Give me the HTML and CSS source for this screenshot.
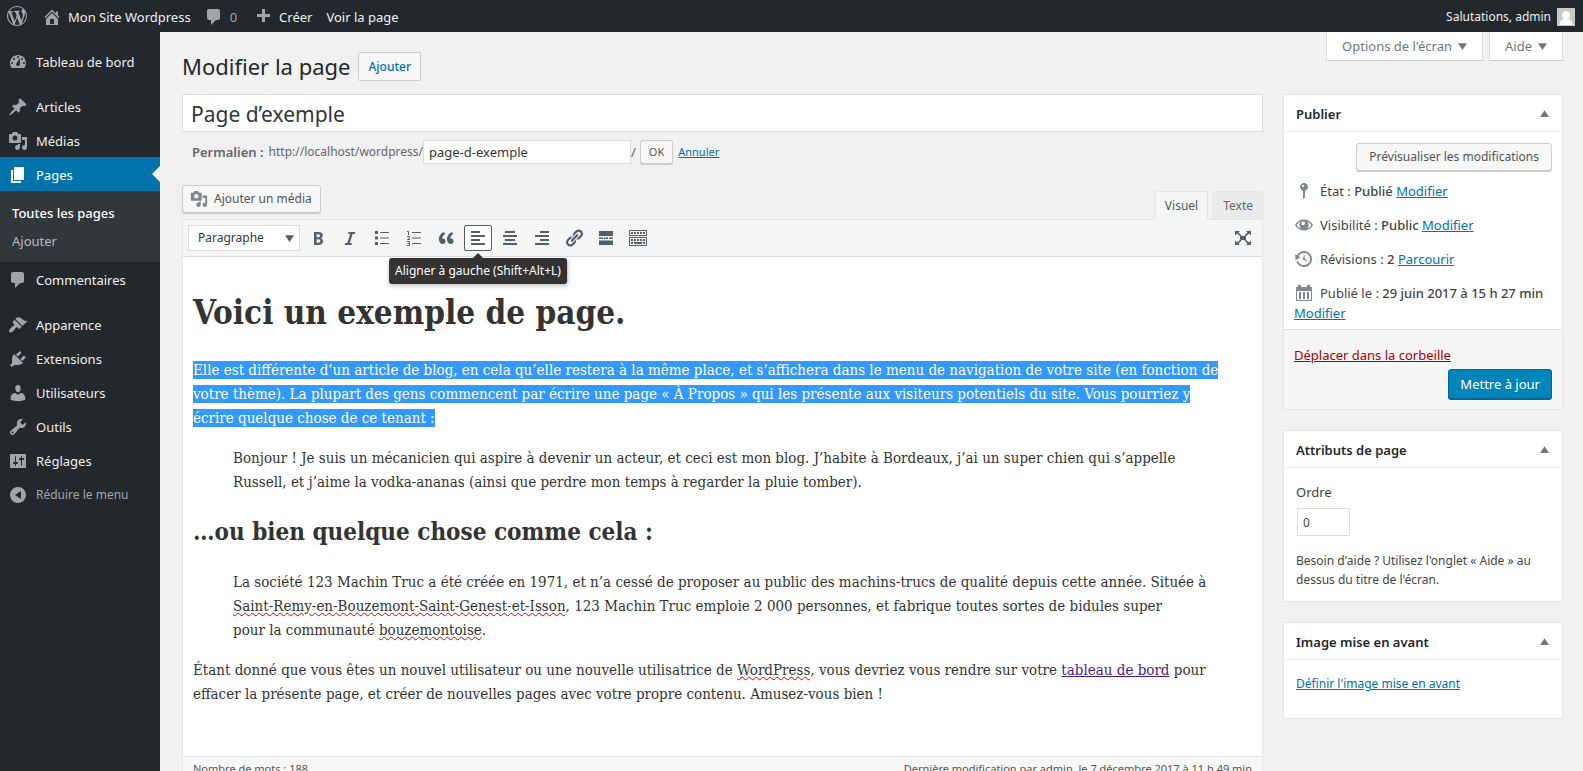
FILE: index.html
```html
<!DOCTYPE html>
<html lang="fr">
<head>
<meta charset="utf-8">
<title>Modifier la page</title>
<link rel="stylesheet" href="styles.css">
</head>
<body>
<svg class="sprite" aria-hidden="true">
  <symbol id="i-wp" viewBox="0 0 20 20"><path d="M20 10c0-5.51-4.49-10-10-10C4.48 0 0 4.49 0 10c0 5.52 4.48 10 10 10 5.51 0 10-4.48 10-10zM7.78 15.37L4.37 6.22c.55-.02 1.17-.08 1.17-.08.5-.06.44-1.13-.06-1.11 0 0-1.45.11-2.37.11-.18 0-.37 0-.58-.01C4.12 2.69 6.87 1.11 10 1.11c2.33 0 4.45.87 6.05 2.34-.68-.11-1.65.39-1.65 1.58 0 .74.45 1.36.9 2.1.35.61.55 1.36.55 2.46 0 1.49-1.4 5-1.4 5l-3.03-8.37c.54-.02.82-.17.82-.17.5-.05.44-1.25-.06-1.22 0 0-1.44.12-2.38.12-.87 0-2.33-.12-2.33-.12-.5-.03-.56 1.2-.06 1.22l.92.08 1.26 3.41zM17.41 10c.24-.64.74-1.87.43-4.25.7 1.29 1.05 2.71 1.05 4.25 0 3.29-1.73 6.24-4.4 7.78.97-2.59 1.94-5.2 2.92-7.78zM6.1 18.09C3.12 16.65 1.11 13.53 1.11 10c0-1.3.23-2.48.72-3.59C3.25 10.3 4.67 14.2 6.1 18.09zm4.03-6.63l2.58 6.98c-.86.29-1.76.45-2.71.45-.79 0-1.57-.11-2.29-.33.81-2.38 1.62-4.74 2.42-7.1z"/></symbol>
  <symbol id="i-home" viewBox="0 0 20 20"><path d="M16 8.5l1.53 1.53-1.06 1.06L10 4.6l-6.47 6.49-1.06-1.06L10 2.5l4 4v-2h2v4zm-6-2.46l6 5.99V18H4v-5.97zM12 17v-5H8v5h4z"/></symbol>
  <symbol id="i-comment" viewBox="0 0 20 20"><path d="M5 2h9c1.1 0 2 .9 2 2v7c0 1.1-.9 2-2 2h-2l-5 5v-5H5c-1.1 0-2-.9-2-2V4c0-1.1.9-2 2-2z"/></symbol>
  <symbol id="i-plus" viewBox="0 0 20 20"><path d="M17 7v3h-5v5H9v-5H4V7h5V2h3v5h5z"/></symbol>
  <symbol id="i-dash" viewBox="0 0 20 20"><path fill-rule="evenodd" d="M3.76 16h12.48A7.98 7.98 0 0 0 18 11c0-4.41-3.58-8-8-8s-8 3.59-8 8c0 1.89.66 3.63 1.76 5zM10 4a1 1 0 1 1 0 2 1 1 0 0 1 0-2zM6 6a1 1 0 1 1 0 2 1 1 0 0 1 0-2zm8 0a1 1 0 1 1 0 2 1 1 0 0 1 0-2zm-5.500 5.500l3.400-5.500v6.200c0 1-.8 1.800-1.900 1.800s-1.900-.9-1.900-1.800c0-.3.200-.5.400-.7zM4 10a1 1 0 1 1 0 2 1 1 0 0 1 0-2zm12 0a1 1 0 1 1 0 2 1 1 0 0 1 0-2z"/></symbol>
  <symbol id="i-pin" viewBox="0 0 20 20"><path d="M10.44 3.02l1.82-1.82 6.36 6.35-1.83 1.82c-1.05-.68-2.48-.57-3.41.36l-.75.75c-.92.93-1.04 2.35-.35 3.41l-1.83 1.82-2.41-2.41-2.8 2.79c-.42.42-3.38 2.71-3.8 2.29s1.86-3.39 2.28-3.81l2.79-2.79L4.1 9.36l1.83-1.82c1.05.69 2.48.57 3.4-.36l.75-.75c.93-.92 1.05-2.35.36-3.41z"/></symbol>
  <symbol id="i-media" viewBox="0 0 20 20"><path d="M13 11V4c0-.55-.45-1-1-1h-1.67L9 1H5L3.67 3H2c-.55 0-1 .45-1 1v7c0 .55.45 1 1 1h10c.55 0 1-.45 1-1zM7 4.500c1.380 0 2.500 1.120 2.500 2.500S8.380 9.500 7 9.500 4.500 8.380 4.500 7 5.620 4.500 7 4.500zM14 6h5v10.500c0 1.380-1.120 2.500-2.500 2.500S14 17.880 14 16.500s1.120-2.500 2.500-2.500c.17 0 .34.02.5.05V9h-3V6zm-4 8.050V13h2v3.500c0 1.380-1.120 2.500-2.500 2.500S7 17.880 7 16.500 8.120 14 9.500 14c.17 0 .34.02.5.05z"/></symbol>
  <symbol id="i-page" viewBox="0 0 20 20"><path d="M6 15V2h10v13H6zm-1 1h8v2H3V5h2v11z"/></symbol>
  <symbol id="i-brush" viewBox="0 0 20 20"><path d="M14.48 11.060L7.410 3.990l1.500-1.500c.5-.56 2.300-.47 3.510.32 1.210.8 1.430 1.280 2.910 2.100 1.180.64 2.450 1.260 4.450.85zm-.71.71L6.700 4.700 4.930 6.470c-.39.39-.39 1.020 0 1.410l1.060 1.060c.39.39.39 1.030 0 1.420-.6.6-1.430 1.110-2.210 1.690-.35.26-.7.53-1.010.84C1.430 14.230.4 16.080 1.400 17.070c.99 1 2.840-.03 4.180-1.360.31-.31.58-.66.85-1.020.57-.78 1.080-1.610 1.690-2.210.39-.39 1.020-.39 1.410 0l1.060 1.060c.39.39 1.020.39 1.410 0z"/></symbol>
  <symbol id="i-plug" viewBox="0 0 20 20"><path d="M13.110 4.360L9.870 7.600 8 5.730l3.240-3.240c.35-.34 1.050-.2 1.560.32.52.51.66 1.210.31 1.550zm-8 1.770l.91-1.120 9.010 9.010-1.190.84c-.71.71-2.630 1.160-3.820 1.160H6.140L4.900 17.260c-.59.59-1.540.59-2.120 0-.59-.58-.59-1.530 0-2.120l1.240-1.240v-3.880c0-1.130.4-3.190 1.090-3.890zm7.260 3.970l3.240-3.240c.34-.35 1.040-.21 1.550.31.52.51.66 1.210.31 1.550l-3.240 3.250z"/></symbol>
  <symbol id="i-user" viewBox="0 0 20 20"><path d="M10 9.250c-2.270 0-2.730-3.440-2.730-3.440C7 4.020 7.820 2 9.970 2c2.160 0 2.980 2.020 2.710 3.810 0 0-.41 3.440-2.680 3.440zm0 2.570L12.720 10c2.390 0 4.520 2.330 4.520 4.530v2.490s-3.650 1.130-7.240 1.130c-3.650 0-7.240-1.130-7.240-1.130v-2.490c0-2.250 1.940-4.480 4.470-4.480z"/></symbol>
  <symbol id="i-tool" viewBox="0 0 20 20"><path d="M16.680 9.770c-1.340 1.340-3.300 1.670-4.950.99l-5.410 6.520c-.99.99-2.590.99-3.580 0s-.99-2.590 0-3.570l6.520-5.420c-.68-1.650-.35-3.610.99-4.950 1.280-1.280 3.120-1.620 4.720-1.060l-2.890 2.890 2.820 2.820 2.860-2.870c.53 1.580.18 3.390-1.080 4.650zM3.810 16.210c.4.39 1.040.39 1.430 0 .4-.4.4-1.040 0-1.430-.39-.4-1.030-.4-1.430 0-.39.39-.39 1.030 0 1.430z"/></symbol>
  <symbol id="i-set" viewBox="0 0 20 20"><path fill-rule="evenodd" d="M18 16V4c0-.55-.45-1-1-1H3c-.55 0-1 .45-1 1v12c0 .55.45 1 1 1h14c.55 0 1-.45 1-1zM8 11h1c.55 0 1 .45 1 1s-.45 1-1 1H8v1.500c0 .28-.22.5-.5.5s-.5-.22-.5-.5V13H6c-.55 0-1-.45-1-1s.45-1 1-1h1V5.500c0-.28.22-.5.5-.5s.5.22.5.5V11zm5-2h-1c-.55 0-1-.45-1-1s.45-1 1-1h1V5.500c0-.28.22-.5.5-.5s.5.22.5.5V7h1c.55 0 1 .45 1 1s-.45 1-1 1h-1v5.500c0 .28-.22.5-.5.5s-.5-.22-.5-.5V9z"/></symbol>
  <symbol id="i-collapse" viewBox="0 0 20 20"><path fill-rule="evenodd" d="M10 2a8 8 0 1 0 0 16 8 8 0 0 0 0-16zM13 6v8l-6-4z"/></symbol>
  <symbol id="i-bold" viewBox="0 0 20 20"><path d="M6 4v13h4.540c1.370 0 2.460-.33 3.260-1 .8-.66 1.200-1.580 1.200-2.770 0-.84-.17-1.510-.51-2.010s-.9-.85-1.670-1.030v-.09c.57-.1 1.020-.4 1.360-.9s.51-1.130.51-1.910c0-1.140-.39-1.980-1.170-2.500C12.750 4.260 11.500 4 9.780 4H6zm2.570 5.150V6.260h1.360c.73 0 1.270.11 1.610.32.34.22.51.58.51 1.070 0 .54-.16.92-.47 1.150s-.82.35-1.510.35h-1.500zm0 2.190h1.600c1.440 0 2.160.53 2.160 1.610 0 .6-.17 1.050-.51 1.340s-.86.43-1.570.43H8.570v-3.380z"/></symbol>
  <symbol id="i-italic" viewBox="0 0 20 20"><path d="M14.780 6h-2.130l-2.800 9h2.120l-.62 2H4.600l.62-2h2.140l2.800-9H8.030l.62-2h6.750z"/></symbol>
  <symbol id="i-ul" viewBox="0 0 20 20"><path d="M3 3h3v3H3zM8 4h9v1H8zM3 8.500h3v3H3zM8 9.500h9v1H8zM3 14h3v3H3zM8 15h9v1H8z"/></symbol>
  <symbol id="i-ol" viewBox="0 0 20 20"><path d="M8 4h9v1H8zM8 9.500h9v1H8zM8 15h9v1H8z"/><path fill="none" stroke="currentColor" d="M3 3.500h1.500V7M3 8.500h2.500v1.200L3.500 11.500h2.500M3 13.500h2.500v4H3M3.500 15.500h2"/></symbol>
  <symbol id="i-quote" viewBox="0 0 20 20"><path d="M9.490 13.220c0-.74-.2-1.380-.61-1.900-.62-.78-1.830-.88-2.530-.72-.29-1.650 1.110-3.750 2.920-4.650L7.880 4c-2.730 1.300-5.420 4.280-4.960 8.050C3.210 14.430 4.590 16 6.540 16c.85 0 1.560-.25 2.120-.75s.83-1.180.83-2.030zm8.050 0c0-.74-.2-1.380-.61-1.900-.63-.78-1.830-.88-2.530-.72-.29-1.650 1.110-3.750 2.920-4.650L15.930 4c-2.730 1.300-5.410 4.280-4.950 8.050.29 2.380 1.660 3.950 3.610 3.950.85 0 1.560-.25 2.120-.75s.83-1.180.83-2.030z"/></symbol>
  <symbol id="i-left" viewBox="0 0 20 20"><path d="M3 3h9v2H3zM3 7h14v2H3zM3 11h9v2H3zM3 15h14v2H3z"/></symbol>
  <symbol id="i-center" viewBox="0 0 20 20"><path d="M5 3h10v2H5zM3 7h14v2H3zM5 11h10v2H5zM3 15h14v2H3z"/></symbol>
  <symbol id="i-right" viewBox="0 0 20 20"><path d="M8 3h9v2H8zM3 7h14v2H3zM8 11h9v2H8zM3 15h14v2H3z"/></symbol>
  <symbol id="i-link" viewBox="0 0 20 20"><path d="M17.740 2.760c1.680 1.690 1.680 4.410 0 6.100l-1.530 1.520c-1.120 1.120-2.700 1.470-4.140 1.090l2.620-2.610.76-.77.76-.76c.84-.84.84-2.200 0-3.040-.84-.85-2.200-.85-3.040 0l-.77.76-3.380 3.380c-.37-1.440-.02-3.020 1.100-4.140l1.520-1.530c1.690-1.680 4.420-1.680 6.100 0zM8.590 13.430l5.340-5.340c.42-.42.42-1.100 0-1.520-.44-.43-1.130-.39-1.530 0l-5.330 5.340c-.42.42-.42 1.100 0 1.520.44.43 1.130.39 1.520 0zm-.76 2.290l4.140-4.150c.38 1.440.03 3.020-1.090 4.140l-1.520 1.530c-1.690 1.680-4.410 1.680-6.100 0-1.680-1.680-1.680-4.420 0-6.100l1.530-1.520c1.120-1.120 2.700-1.470 4.140-1.100l-4.140 4.150c-.85.84-.85 2.200 0 3.050.84.84 2.200.84 3.040 0z"/></symbol>
  <symbol id="i-more" viewBox="0 0 20 20"><path d="M3 3h14v5H3zM3 9.500h4v1.500H3zM8 9.500h4v1.500H8zM13 9.500h4v1.500h-4zM3 12.500h14v4.500H3z"/></symbol>
  <symbol id="i-kbd" viewBox="0 0 20 20"><path fill="none" stroke="currentColor" d="M1.500 2.500h17v5h-17zM1.500 9.500h17v8h-17z"/><path d="M3 4h2v2H3zM6 4h2v2H6zM9 4h2v2H9zM12 4h2v2h-2zM15 4h2v2h-2zM3 11h2v2H3zM6 11h2v2H6zM9 11h2v2H9zM12 11h2v2h-2zM15 11h2v2h-2zM3 14h2v2H3zM6 14h8v2H6zM15 14h2v2h-2z"/></symbol>
  <symbol id="i-full" viewBox="0 0 20 20"><path d="M7 8h6v4H7zM2 3h5L5.500 4.500 8.500 7.500 7.500 8.500 4 5.500 2 7.500zM18 3h-5l1.500 1.500-3 3 1 1L16 5.500l2 2zM2 17h5l-1.500-1.500 3-3-1-1L4 14.500l-2-2zM18 17h-5l1.500-1.500-3-3 1-1 3.500 3 2-2z"/></symbol>
  <symbol id="i-status" viewBox="0 0 20 20"><path fill-rule="evenodd" d="M14 6c0 1.860-1.280 3.410-3 3.860V16c0 1-2 2-2 2V9.860C7.280 9.410 6 7.860 6 6c0-2.210 1.790-4 4-4s4 1.790 4 4zM8 5c0 .55.45 1 1 1s1-.45 1-1-.45-1-1-1-1 .45-1 1z"/></symbol>
  <symbol id="i-eye" viewBox="0 0 20 20"><path fill-rule="evenodd" d="M1 10c1.800-3.500 5-5.500 9-5.500s7.200 2 9 5.500c-1.800 3.500-5 5.500-9 5.500S2.800 13.500 1 10zm1.700 0c1 1.700 2.400 3 4.300 3.600A4.700 4.700 0 0 1 7 6.400C5.100 7 3.700 8.300 2.700 10zm14.600 0c-1-1.700-2.400-3-4.300-3.600a4.700 4.700 0 0 1 0 7.200c1.900-.6 3.300-1.900 4.300-3.600zM9.500 6.500c-1.200 0-2 .8-2 2s1 1.800 2 1.500c1-.3 1.500-1 1.500-2 0-.9-.6-1.500-1.500-1.500z"/></symbol>
  <symbol id="i-rev" viewBox="0 0 20 20"><path d="M13.650 2.880c3.930 2.010 5.480 6.840 3.470 10.770s-6.830 5.480-10.770 3.470c-1.870-.96-3.200-2.560-3.860-4.400l1.640-1.030c.45 1.570 1.520 2.950 3.080 3.760 3.010 1.540 6.690.35 8.230-2.660 1.550-3.010.36-6.690-2.650-8.240C9.780 3.010 6.100 4.200 4.560 7.210l1.880.97-4.950 3.080-.39-5.820 1.780.91C4.900 2.400 9.750.89 13.650 2.880zm-4.360 7.830C9.110 10.530 9 10.280 9 10c0-.07.03-.12.04-.19h-.01L10 5l.97 4.810L14 13l-4.500-2.120.02-.02c-.08-.04-.16-.09-.23-.15z"/></symbol>
  <symbol id="i-cal" viewBox="0 0 20 20"><path fill-rule="evenodd" d="M2 4h2V3a1 1 0 0 1 3 0v1h6V3a1 1 0 0 1 3 0v1h2v14H2zM3 8v9h14V8zM5 9h2v7H5zM9 9h2v7H9zM13 9h2v7h-2z"/></symbol>
  <symbol id="i-down" viewBox="0 0 8 6"><path d="M0 0h8L4 6z"/></symbol>
  <symbol id="i-up" viewBox="0 0 8 6"><path d="M0 6h8L4 0z"/></symbol>
</svg>

<div class="app">
  <header class="bar">
    <a class="bar-item bar-wp" href="#" aria-label="WordPress"><svg class="icon"><use href="#i-wp"/></svg></a>
    <a class="bar-item bar-site" href="#"><svg class="icon"><use href="#i-home"/></svg>Mon Site Wordpress</a>
    <a class="bar-item bar-comments" href="#"><svg class="icon"><use href="#i-comment"/></svg>0</a>
    <a class="bar-item bar-new" href="#"><svg class="icon"><use href="#i-plus"/></svg>Créer</a>
    <a class="bar-item" href="#">Voir la page</a>
    <a class="bar-item bar-user" href="#">Salutations, admin
      <svg class="avatar" viewBox="0 0 18 18"><path fill="#c8c8c8" d="M0 0h18v18H0z"/><path fill="#fff" d="M9 3c2.500 0 4 1.700 4 4 0 1.500-.6 2.700-1.500 3.500.6 1.200 3.500 1.500 4 5.500v1h-13v-1c.5-4 3.400-4.300 4-5.500C5.600 9.700 5 8.500 5 7c0-2.300 1.500-4 4-4z"/></svg>
    </a>
  </header>

  <div class="body">
    <nav class="menu">
      <a class="menu-item" href="#"><svg class="icon"><use href="#i-dash"/></svg>Tableau de bord</a>
      <a class="menu-item first" href="#"><svg class="icon"><use href="#i-pin"/></svg>Articles</a>
      <a class="menu-item" href="#"><svg class="icon"><use href="#i-media"/></svg>Médias</a>
      <a class="menu-item current" href="#"><svg class="icon"><use href="#i-page"/></svg>Pages</a>
      <div class="submenu">
        <a class="sub-item active" href="#">Toutes les pages</a>
        <a class="sub-item" href="#">Ajouter</a>
      </div>
      <a class="menu-item" href="#"><svg class="icon"><use href="#i-comment"/></svg>Commentaires</a>
      <a class="menu-item first" href="#"><svg class="icon"><use href="#i-brush"/></svg>Apparence</a>
      <a class="menu-item" href="#"><svg class="icon"><use href="#i-plug"/></svg>Extensions</a>
      <a class="menu-item" href="#"><svg class="icon"><use href="#i-user"/></svg>Utilisateurs</a>
      <a class="menu-item" href="#"><svg class="icon"><use href="#i-tool"/></svg>Outils</a>
      <a class="menu-item" href="#"><svg class="icon"><use href="#i-set"/></svg>Réglages</a>
      <button class="menu-item collapse" type="button"><svg class="icon"><use href="#i-collapse"/></svg>Réduire le menu</button>
    </nav>

    <main class="content">
      <div class="top">
        <div class="heading">
          <h1 class="title">Modifier la page</h1>
          <a class="add-new" href="#">Ajouter</a>
        </div>
        <div class="screen-tabs">
          <button class="screen-tab" type="button">Options de l'écran<svg class="caret"><use href="#i-down"/></svg></button>
          <button class="screen-tab" type="button">Aide<svg class="caret"><use href="#i-down"/></svg></button>
        </div>
      </div>

      <div class="columns">
        <section class="primary">
          <input class="page-title" type="text" aria-label="Titre" value="Page d’exemple">
          <div class="permalink">
            <label class="permalink-label" for="slug"><strong>Permalien :</strong><span>http://localhost/wordpress/</span></label><input class="slug" id="slug" type="text" value="page-d-exemple"><span>/</span>
            <button class="button small" type="button">OK</button>
            <a class="cancel" href="#">Annuler</a>
          </div>
          <div class="editor-tools">
            <button class="button add-media" type="button"><svg class="icon"><use href="#i-media"/></svg>Ajouter un média</button>
            <div class="editor-tabs">
              <button class="editor-tab on" type="button">Visuel</button>
              <button class="editor-tab" type="button">Texte</button>
            </div>
          </div>
          <div class="editor">
            <div class="toolbar">
              <span class="format"><select class="format-select" aria-label="Format"><option>Paragraphe</option></select><svg class="caret"><use href="#i-down"/></svg></span>
              <button class="tool" type="button" aria-label="Gras"><svg class="icon"><use href="#i-bold"/></svg></button>
              <button class="tool" type="button" aria-label="Italique"><svg class="icon"><use href="#i-italic"/></svg></button>
              <button class="tool" type="button" aria-label="Liste à puces"><svg class="icon"><use href="#i-ul"/></svg></button>
              <button class="tool" type="button" aria-label="Liste numérotée"><svg class="icon"><use href="#i-ol"/></svg></button>
              <button class="tool" type="button" aria-label="Citation"><svg class="icon"><use href="#i-quote"/></svg></button>
              <button class="tool pressed" type="button" aria-describedby="tip"><svg class="icon"><use href="#i-left"/></svg><span class="tip" id="tip" role="tooltip">Aligner à gauche (Shift+Alt+L)</span></button>
              <button class="tool" type="button" aria-label="Centrer"><svg class="icon"><use href="#i-center"/></svg></button>
              <button class="tool" type="button" aria-label="Aligner à droite"><svg class="icon"><use href="#i-right"/></svg></button>
              <button class="tool" type="button" aria-label="Lien"><svg class="icon"><use href="#i-link"/></svg></button>
              <button class="tool" type="button" aria-label="Lire la suite"><svg class="icon"><use href="#i-more"/></svg></button>
              <button class="tool" type="button" aria-label="Outils avancés"><svg class="icon"><use href="#i-kbd"/></svg></button>
              <button class="tool full" type="button" aria-label="Plein écran"><svg class="icon"><use href="#i-full"/></svg></button>
            </div>
            <div class="document">
              <h1>Voici un exemple de page.</h1>
              <p><span class="selected">Elle est différente d’un article de blog, en cela qu’elle restera à la même place, et s’affichera dans le menu de navigation de votre site (en fonction de votre thème). La plupart des gens commencent par écrire une page « À Propos » qui les présente aux visiteurs potentiels du site. Vous pourriez y<br>écrire quelque chose de ce tenant :</span></p>
              <blockquote>Bonjour ! Je suis un mécanicien qui aspire à devenir un acteur, et ceci est mon blog. J’habite à Bordeaux, j’ai un super chien qui s’appelle Russell, et j’aime la vodka-ananas (ainsi que perdre mon temps à regarder la pluie tomber).</blockquote>
              <h2>…ou bien quelque chose comme cela :</h2>
              <blockquote>La société 123 Machin Truc a été créée en 1971, et n’a cessé de proposer au public des machins-trucs de qualité depuis cette année. Située à <span class="typo">Saint-Remy-en-Bouzemont-Saint-Genest-et-Isson</span>, 123 Machin Truc emploie 2 000 personnes, et fabrique toutes sortes de bidules super<br>pour la communauté <span class="typo">bouzemontoise</span>.</blockquote>
              <p>Étant donné que vous êtes un nouvel utilisateur ou une nouvelle utilisatrice de <span class="typo">WordPress</span>, vous devriez vous rendre sur votre <a href="#">tableau de bord</a> pour effacer la présente page, et créer de nouvelles pages avec votre propre contenu. Amusez-vous bien !</p>
            </div>
            <div class="status"><span>Nombre de mots : 188</span><span>Dernière modification par admin, le 7 décembre 2017 à 11 h 49 min</span></div>
          </div>
        </section>

        <aside class="side">
          <section class="box">
            <h2 class="box-head">Publier<svg class="caret"><use href="#i-up"/></svg></h2>
            <div class="publish">
              <div class="preview"><button class="button" type="button">Prévisualiser les modifications</button></div>
              <p class="row"><svg class="icon"><use href="#i-status"/></svg>État : <strong>Publié</strong> <a href="#">Modifier</a></p>
              <p class="row"><svg class="icon"><use href="#i-eye"/></svg>Visibilité : <strong>Public</strong> <a href="#">Modifier</a></p>
              <p class="row"><svg class="icon"><use href="#i-rev"/></svg>Révisions : <strong>2</strong> <a href="#">Parcourir</a></p>
              <p class="row"><svg class="icon"><use href="#i-cal"/></svg>Publié le : <strong>29 juin 2017 à 15 h 27 min</strong> <a href="#">Modifier</a></p>
            </div>
            <div class="actions">
              <a class="trash" href="#">Déplacer dans la corbeille</a>
              <button class="button primary-button" type="button">Mettre à jour</button>
            </div>
          </section>
          <section class="box">
            <h2 class="box-head">Attributs de page<svg class="caret"><use href="#i-up"/></svg></h2>
            <div class="inside">
              <label class="order-label" for="order">Ordre</label>
              <input class="order" id="order" type="text" value="0">
              <p class="help">Besoin d'aide ? Utilisez l'onglet « Aide » au dessus du titre de l'écran.</p>
            </div>
          </section>
          <section class="box">
            <h2 class="box-head">Image mise en avant<svg class="caret"><use href="#i-up"/></svg></h2>
            <div class="inside featured"><a href="#">Définir l'image mise en avant</a></div>
          </section>
        </aside>
      </div>
    </main>
  </div>
</div>
</body>
</html>
```
FILE: styles.css
```css
* { box-sizing: border-box; }
body {
  margin: 0;
  background: #f1f1f1;
  color: #444;
  font: 13px/20px "Noto Sans", "Open Sans", sans-serif;
}
button, input, select { font: inherit; color: inherit; margin: 0; }
button { cursor: pointer; }
a { color: #0073aa; }
strong { font-weight: 500; }
.sprite { display: none; }
.icon { width: 20px; height: 20px; fill: currentColor; flex: none; }
.caret { width: 9px; height: 7px; fill: #72777c; flex: none; }

.app { display: flex; flex-direction: column; height: 100vh; overflow: hidden; }

/* Admin bar */
.bar { display: flex; flex: none; height: 32px; padding: 0 8px 0 7px; background: #23282d; }
.bar-item { display: flex; align-items: center; gap: 6px; padding: 2px 8px 0; color: #eee; text-decoration: none; }
.bar-item .icon { color: #a0a5aa; }
.bar-wp { padding: 0 7px 0 0; }
.bar-site { padding-right: 5px; }
.bar-comments { color: #a0a5aa; }
.bar-new { padding-right: 6px; }
.bar-user { margin-left: auto; padding-right: 0; font-size: 12px; }
.avatar { width: 18px; height: 18px; }

.body { display: flex; flex: 1; min-height: 0; }

/* Side menu */
.menu { flex: none; width: 160px; padding-top: 12px; background: #23282d; }
.menu-item { position: relative; display: flex; align-items: center; gap: 8px; width: 100%; height: 34px; padding: 2px 8px 0; border: 0; background: none; color: #eee; text-decoration: none; white-space: nowrap; }
.menu-item .icon { color: #a0a5aa; }
.menu-item.first { margin-top: 11px; }
.menu-item.current { background: #0073aa; color: #fff; }
.menu-item.current .icon { color: #fff; }
.menu-item.current::after { content: ""; position: absolute; right: 0; top: 9px; border: 8px solid transparent; border-left: 0; border-right-color: #f1f1f1; }
.menu-item.collapse { color: #a0a5aa; font-size: 12px; }
.submenu { padding: 8px 0 7px; background: #32373c; }
.sub-item { display: block; padding: 4px 12px; color: #b4b9be; text-decoration: none; }
.sub-item.active { color: #fff; font-weight: 500; }

/* Page header */
.content { flex: 1; min-width: 0; padding: 0 20px 0 22px; }
.top { display: flex; justify-content: space-between; align-items: flex-start; height: 62px; }
.heading { display: flex; align-items: center; gap: 8px; padding-top: 20px; }
.title { margin: 0; color: #23282d; font-size: 22px; line-height: 29px; font-weight: 400; }
.add-new { padding: 4px 9px; border: 1px solid #ccc; border-radius: 2px; background: #f7f7f7; color: #0073aa; line-height: 19px; font-weight: 500; font-size: 12px; text-decoration: none; }
.screen-tabs { display: flex; gap: 6px; }
.screen-tab { display: flex; align-items: center; gap: 6px; height: 29px; padding: 0 15px; border: 1px solid #ddd; border-top: 0; border-bottom-color: #ccc; background: #fff; color: #72777c; }

.columns { display: flex; align-items: flex-start; gap: 20px; }
.primary { flex: 1; min-width: 0; }
.side { display: flex; flex: none; flex-direction: column; gap: 20px; width: 280px; }

/* Title and permalink */
.page-title { display: block; width: 100%; height: 38px; padding: 4px 8px 2px; border: 1px solid #ddd; background: #fff; color: #32373c; font-size: 21px; line-height: 30px; }
.permalink { display: flex; align-items: center; height: 24px; margin: 8px 0 20px; padding-left: 10px; color: #666; white-space: nowrap; }
.permalink-label { display: flex; justify-content: space-between; width: 231px; font-size: 12px; }
.permalink-label strong { font-size: 13px; font-weight: 600; }
.slug { width: 208px; height: 24px; padding: 0 5px; border: 1px solid #ddd; background: #fff; color: #32373c; }
.button { padding: 0 12px; height: 28px; border: 1px solid #ccc; border-radius: 3px; background: #f7f7f7; box-shadow: 0 1px 0 #ccc; color: #555; font-size: 12px; white-space: nowrap; }
.button.small { height: 24px; margin: 0 5px 0 4px; padding: 0 8px; font-size: 11px; }
.cancel { font-size: 11px; }

/* Editor */
.editor-tools { display: flex; justify-content: space-between; height: 35px; }
.add-media { display: flex; align-items: center; gap: 6px; height: 28px; margin-top: 1px; padding: 0 8px 0 7px; }
.add-media .icon { width: 18px; height: 18px; color: #82878c; }
.editor-tabs { display: flex; align-items: flex-end; gap: 5px; }
.editor-tab { position: relative; height: 28px; padding: 0 9px; border: 1px solid #e5e5e5; border-bottom: 0; background: #ebebeb; color: #666; font-size: 12px; }
.editor-tab.on { z-index: 1; height: 29px; margin-bottom: -1px; background: #f5f5f5; color: #555; }
.editor { border: 1px solid #e5e5e5; background: #fff; }
.toolbar { display: flex; align-items: center; gap: 4px; height: 37px; padding: 0 5px 1px; border-bottom: 1px solid #ddd; background: #f5f5f5; }
.format { position: relative; width: 112px; }
.format-select { display: block; width: 100%; height: 26px; padding: 0 9px; appearance: none; border: 1px solid #ddd; border-radius: 0; background: #fff; color: #32373c; font-size: 12px; }
.format .caret { position: absolute; right: 6px; top: 10px; fill: #555d66; }
.tool { position: relative; display: flex; justify-content: center; align-items: center; width: 28px; height: 26px; padding: 0; border: 1px solid transparent; border-radius: 2px; background: none; color: #555d66; }
.tool.pressed { border-color: #555d66; background: #fff; }
.tool.full { margin-left: auto; }
.tip { position: absolute; z-index: 2; top: 32px; left: 50%; transform: translateX(-50%); padding: 4px 6px; border-radius: 3px; background: #333; box-shadow: 0 2px 4px rgba(0, 0, 0, .25); color: #fff; font-size: 12px; line-height: 18px; white-space: nowrap; }
.tip::before { content: ""; position: absolute; left: 50%; top: -5px; margin-left: -5px; border: 5px solid transparent; border-top: 0; border-bottom-color: #333; }

.document { min-height: 499px; padding: 0 10px; color: #333; font: 15px/24px "DejaVu Serif Condensed", "DejaVu Serif", serif; }
.document h1 { margin: 0; padding: 35px 0 24px; font-size: 33px; line-height: 42px; }
.document h2 { margin: 22px 0; font-size: 24px; line-height: 32px; }
.document p { margin: 0 0 16px; }
.document blockquote { margin: 16px 40px; }
.document a { color: #4b1b87; }
.selected { background: #39f; color: #fff; }
.typo { text-decoration: underline wavy #c00 1px; }
.status { display: flex; justify-content: space-between; padding: 2px 10px; border-top: 1px solid #e5e5e5; background: #f7f7f7; color: #555; font-size: 11px; }

/* Side boxes */
.box { border: 1px solid #e5e5e5; background: #fff; }
.box-head { display: flex; align-items: center; justify-content: space-between; height: 37px; margin: 0; padding: 1px 13px 0 12px; border-bottom: 1px solid #eee; color: #23282d; font-size: 13px; line-height: 20px; font-weight: 600; }
.publish { padding: 11px 10px 6px; }
.preview { display: flex; justify-content: flex-end; margin-bottom: 10px; }
.row { margin: 0 0 14px; }
.row:last-child { margin-bottom: 0; }
.row .icon { margin-right: 6px; color: #82878c; vertical-align: top; }
.actions { display: flex; flex-direction: column; padding: 15px 10px 10px; border-top: 1px solid #ddd; background: #f5f5f5; }
.trash { align-self: flex-start; color: #a00; }
.primary-button { align-self: flex-end; height: 30px; margin-top: 4px; padding: 0 11px; border-color: #006799; background: #0085ba; box-shadow: 0 1px 0 #006799; color: #fff; font-size: 13px; }
.inside { padding: 14px 12px 12px; font-size: 12px; }
.order-label { display: block; font-size: 13px; }
.order { display: block; width: 53px; height: 28px; margin: 6px 1px 15px; padding: 0 5px; border: 1px solid #ddd; background: #fff; }
.help { margin: 0; line-height: 19px; }
.featured { padding-bottom: 24px; }
```
